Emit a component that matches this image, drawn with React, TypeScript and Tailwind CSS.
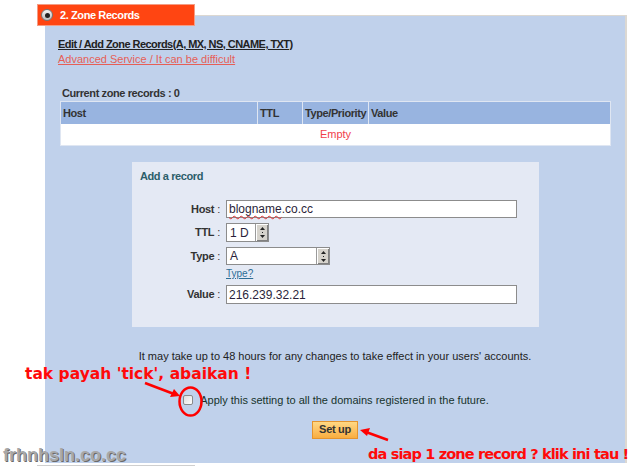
import React from "react";

const ui = { fontFamily: '"Liberation Sans", Arial, sans-serif' };
const note = { fontFamily: '"DejaVu Sans", Verdana, sans-serif' };

function Spinner() {
  return (
    <div className="flex h-full w-[13px] flex-col items-center justify-center gap-[2px] border-l border-[#9a9a9a] bg-[#d6d3cc] shadow-[inset_1px_1px_0_#fff,inset_-1px_-1px_0_#808080]">
      <svg width="5" height="3" viewBox="0 0 5 3"><path d="M0 3 L2.5 0 L5 3 Z" fill="#222" /></svg>
      <div className="h-[1px] w-[1px] bg-[#222]" />
      <svg width="5" height="3" viewBox="0 0 5 3"><path d="M0 0 L2.5 3 L5 0 Z" fill="#222" /></svg>
    </div>
  );
}

function FieldLabel({ children }: { children: React.ReactNode }) {
  return (
    <div className="flex h-[18px] items-center justify-end pr-[2px] text-[11px] font-bold tracking-[-0.3px] text-[#333]">
      {children}
      <span className="ml-[3px] font-normal">:</span>
    </div>
  );
}

export default function App() {
  return (
    <div className="relative h-[469px] w-[640px] overflow-hidden bg-white" style={ui}>
      {/* section tab */}
      <div className="relative z-10 ml-[37px] mt-[4px] flex h-[22px] w-[158px] items-center gap-[7px] border border-[#f49c84] bg-[#ff4512] pl-[3px]">
        <div className="flex h-[12px] w-[12px] items-center justify-center rounded-full border border-[#777] bg-gradient-to-b from-[#f4f4f4] to-[#bdbdbd]">
          <div className="h-[5px] w-[5px] rounded-full bg-[#222]" />
        </div>
        <span className="text-[11px] font-bold tracking-[-0.4px] text-white">2. Zone Records</span>
      </div>

      {/* section body */}
      <div className="-mt-[11px] ml-[45px] flex h-[448px] w-[582px] flex-col border-r-2 border-t border-[#dcd8d2] bg-[#c0d1eb]">
        <div className="ml-[13px] mt-[21px] text-[11px] font-bold leading-[14px] tracking-[-0.55px] text-[#222] underline">
          Edit / Add Zone Records(A, MX, NS, CNAME, TXT)
        </div>
        <div className="ml-[13px] mt-[1px] text-[11px] leading-[14px] text-[#e65f57] underline">
          Advanced Service / It can be difficult
        </div>

        <div className="ml-[17px] mt-[20px] text-[11px] font-bold leading-[14px] tracking-[-0.4px] text-[#333]">
          Current zone records : 0
        </div>

        <div className="ml-[15px] mt-[1px] w-[551px] border border-[#dfe6f2] bg-white">
          <div className="grid h-[22px] grid-cols-[197px_45px_66px_1fr] bg-[#98b4e0] text-[11px] font-bold tracking-[-0.4px] text-[#333]">
            <div className="flex items-center border-r border-[#dfe6f2] pl-[2px]">Host</div>
            <div className="flex items-center border-r border-[#dfe6f2] pl-[2px]">TTL</div>
            <div className="flex items-center border-r border-[#dfe6f2] pl-[2px]">Type/Priority</div>
            <div className="flex items-center pl-[2px]">Value</div>
          </div>
          <div className="flex h-[21px] items-center justify-center text-[11px] text-[#f0404a]">Empty</div>
        </div>

        {/* add a record */}
        <div className="ml-[87px] mt-[16px] h-[165px] w-[407px] bg-[#e4e9f4] pl-[8px] pt-[7px]">
          <div className="text-[11px] font-bold leading-[14px] tracking-[-0.4px] text-[#2c5e6a]">Add a record</div>
          <div className="mt-[17px] grid grid-cols-[82px_1fr] gap-x-[4px]">
            <FieldLabel>Host</FieldLabel>
            <div className="flex h-[18px] w-[291px] items-center border border-[#8c8c8c] bg-white pl-[2px] text-[12px] text-[#2a1f3a]">
              <span className="underline decoration-[#e03030] decoration-wavy decoration-1 underline-offset-2">blogname</span>
              .co.cc
            </div>

            <div className="mt-[5px]"><FieldLabel>TTL</FieldLabel></div>
            <div className="mt-[5px] flex h-[19px] w-[43px] items-stretch border border-[#8c8c8c] bg-white">
              <div className="flex flex-1 items-center pl-[3px] text-[12px] text-[#2a1f3a]">1 D</div>
              <Spinner />
            </div>

            <div className="mt-[5px]"><FieldLabel>Type</FieldLabel></div>
            <div className="mt-[5px] flex h-[18px] w-[104px] items-stretch border border-[#8c8c8c] bg-white">
              <div className="flex flex-1 items-center pl-[3px] text-[12px] text-[#2a1f3a]">A</div>
              <Spinner />
            </div>

            <div />
            <div className="mt-[3px] text-[10px] leading-[12px] text-[#2d6e96] underline">Type?</div>

            <div className="mt-[5px]"><FieldLabel>Value</FieldLabel></div>
            <div className="mt-[5px] flex h-[19px] w-[291px] items-center border border-[#8c8c8c] bg-white pl-[2px] text-[12px] text-[#2a1f3a]">
              216.239.32.21
            </div>
          </div>
        </div>

        <div className="mt-[22px] text-center text-[11px] leading-[14px] text-[#222]">
          It may take up to 48 hours for any changes to take effect in your users' accounts.
        </div>

        <div className="mt-[29px] flex items-center justify-center gap-[7px] pl-[2px] text-[11px] text-[#17332b]">
          <div className="h-[10px] w-[10px] rounded-[2px] border border-[#8a8a8a] bg-gradient-to-br from-[#dcdcdc] to-white" />
          <span>Apply this setting to all the domains registered in the future.</span>
        </div>

        <div className="mt-[12px] flex justify-center">
          <div className="flex h-[18px] w-[46px] items-center justify-center border border-[#e4942e] bg-gradient-to-b from-[#ffd883] to-[#f9ad3e] text-[11px] font-bold tracking-[-0.3px] text-[#333]">
            Set up
          </div>
        </div>
      </div>

      <div className="ml-[37px] mt-[2px] h-[1px] w-[158px] bg-[#cfcfcf]" />

      {/* annotations */}
      <div className="absolute left-[25px] top-[364px] whitespace-nowrap text-[15.5px] font-bold leading-[20px] text-[#ff0a0a]" style={note}>
        tak payah 'tick', abaikan !
      </div>
      <div className="absolute left-[368px] top-[444px] whitespace-nowrap text-[14.5px] font-bold leading-[20px] tracking-[-0.85px] text-[#ff0a0a]" style={note}>
        da siap 1 zone record ? klik ini tau !
      </div>
      <svg className="absolute left-0 top-0" width="640" height="469" viewBox="0 0 640 469">
        <line x1="145" y1="383" x2="174" y2="394" stroke="#f00" strokeWidth="2.5" />
        <path d="M180 396 L170 397 L174 389 Z" fill="#f00" />
        <ellipse cx="190.5" cy="401.5" rx="11" ry="14" fill="none" stroke="#f00" strokeWidth="2.5" />
        <line x1="388" y1="440" x2="366" y2="432" stroke="#f00" strokeWidth="2.5" />
        <path d="M360 430 L370 428 L367 436 Z" fill="#f00" />
      </svg>
      <div
        className="absolute left-[3px] top-[444px] whitespace-nowrap text-[18px] font-bold leading-[22px] text-[#a8a8a8] [text-shadow:1px_1px_0_#6a6a6a]"
        style={ui}
      >
        frhnhsln.co.cc
      </div>
    </div>
  );
}
